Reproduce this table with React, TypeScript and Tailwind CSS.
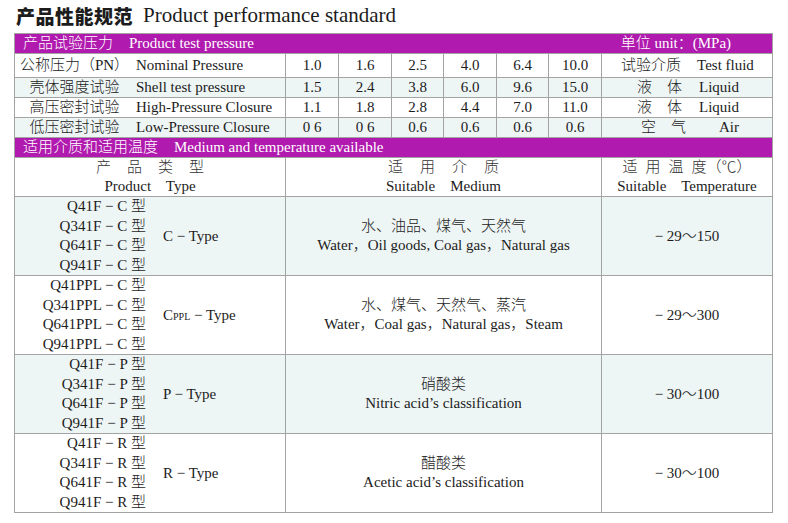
import React from 'react';

const serif = "font-['Liberation_Serif','Noto_Sans_CJK_SC',serif]";
const cell = 'border border-[#a3a3a3] p-0';

const pressureRows = [
  { cn: '公称压力（PN）', en: 'Nominal Pressure', vals: ['1.0', '1.6', '2.5', '4.0', '6.4', '10.0'], fluidCn: '试验介质', fluidEn: 'Test fluid', pl: 'pl-[19px]', gap: 'ml-[16px]', bg: 'bg-white', h: 'h-[24px]' },
  { cn: '壳体强度试验', en: 'Shell test pressure', vals: ['1.5', '2.4', '3.8', '6.0', '9.6', '15.0'], fluidCn: '液　体', fluidEn: 'Liquid', pl: 'pl-[35px]', gap: 'ml-[17px]', bg: 'bg-[#eef5f5]', h: 'h-[20px]' },
  { cn: '高压密封试验', en: 'High-Pressure Closure', vals: ['1.1', '1.8', '2.8', '4.4', '7.0', '11.0'], fluidCn: '液　体', fluidEn: 'Liquid', pl: 'pl-[35px]', gap: 'ml-[17px]', bg: 'bg-white', h: 'h-[20px]' },
  { cn: '低压密封试验', en: 'Low-Pressure Closure', vals: ['0 6', '0 6', '0.6', '0.6', '0.6', '0.6'], fluidCn: '空　气', fluidEn: 'Air', pl: 'pl-[39px]', gap: 'ml-[33px]', bg: 'bg-[#eef5f5]', h: 'h-[20px]' },
];

const groups = [
  { letter: 'C', models: ['Q41F', 'Q341F', 'Q641F', 'Q941F'], type: 'C', sub: '', cn: '水、油品、煤气、天然气', en: 'Water，Oil goods, Coal gas，Natural gas', temp: '− 29～150', bg: 'bg-[#eef5f5]' },
  { letter: 'C', models: ['Q41PPL', 'Q341PPL', 'Q641PPL', 'Q941PPL'], type: 'C', sub: 'PPL', cn: '水、煤气、天然气、蒸汽', en: 'Water，Coal gas，Natural gas，Steam', temp: '− 29～300', bg: 'bg-white' },
  { letter: 'P', models: ['Q41F', 'Q341F', 'Q641F', 'Q941F'], type: 'P', sub: '', cn: '硝酸类', en: 'Nitric acid’s classification', temp: '− 30～100', bg: 'bg-[#eef5f5]' },
  { letter: 'R', models: ['Q41F', 'Q341F', 'Q641F', 'Q941F'], type: 'R', sub: '', cn: '醋酸类', en: 'Acetic acid’s classification', temp: '− 30～100', bg: 'bg-white' },
];

export default function App() {
  return (
    <div className={`w-[788px] h-[523px] bg-white text-[#1c1c1c] ${serif}`}>
      {/* title */}
      <div className="flex h-[33px] items-center pl-[16px] pb-[2px]">
        <span className="font-['Noto_Sans_CJK_SC',sans-serif] text-[19px] font-black leading-none tracking-[0.5px]">产品性能规范</span>
        <span className="ml-[10px] text-[21px] leading-none">Product performance standard</span>
      </div>

      <table className="ml-[14px] w-[758px] table-fixed border-collapse text-[15px] font-light leading-none">
        <colgroup>
          <col className="w-[271px]" />
          <col className="w-[53px]" />
          <col className="w-[53px]" />
          <col className="w-[52px]" />
          <col className="w-[53px]" />
          <col className="w-[52px]" />
          <col className="w-[53px]" />
          <col className="w-[171px]" />
        </colgroup>
        <tbody>
          <tr className="h-[20px]">
            <td colSpan={8} className={`${cell} bg-[#b01aae] text-white`}>
              <div className="flex items-center">
                <span className="pl-[8px]">产品试验压力</span>
                <span className="ml-[16px]">Product test pressure</span>
                <span className="ml-auto pr-[41px]">单位 unit：(MPa)</span>
              </div>
            </td>
          </tr>

          {pressureRows.map((r) => (
            <tr key={r.en} className={`${r.h} ${r.bg}`}>
              <td className={cell}>
                <div className="flex items-center">
                  <span className="w-[119px] text-center">{r.cn}</span>
                  <span className="ml-[2px]">{r.en}</span>
                </div>
              </td>
              {r.vals.map((v, i) => (
                <td key={i} className={`${cell} text-center whitespace-pre`}>{v}</td>
              ))}
              <td className={cell}>
                <div className={`flex items-center ${r.pl}`}>
                  <span>{r.fluidCn}</span>
                  <span className={r.gap}>{r.fluidEn}</span>
                </div>
              </td>
            </tr>
          ))}

          <tr className="h-[20px]">
            <td colSpan={8} className={`${cell} bg-[#b01aae] text-white`}>
              <div className="flex items-center">
                <span className="pl-[8px]">适用介质和适用温度</span>
                <span className="ml-[16px]">Medium and temperature available</span>
              </div>
            </td>
          </tr>

          <tr className="h-[38px] bg-white">
            <td className={`${cell} text-center`}>
              <div className="flex justify-center gap-[16px] leading-[19px] text-[#333]">
                <span>产</span><span>品</span><span>类</span><span>型</span>
              </div>
              <div className="whitespace-pre leading-[19px]">Product    Type</div>
            </td>
            <td colSpan={6} className={`${cell} text-center`}>
              <div className="flex justify-center gap-[17px] leading-[19px] text-[#333]">
                <span>适</span><span>用</span><span>介</span><span>质</span>
              </div>
              <div className="whitespace-pre leading-[19px]">Suitable    Medium</div>
            </td>
            <td className={`${cell} text-center`}>
              <div className="flex justify-center gap-[8px] leading-[19px] text-[#333]">
                <span>适</span><span>用</span><span>温</span><span>度（℃）</span>
              </div>
              <div className="whitespace-pre leading-[19px]">Suitable    Temperature</div>
            </td>
          </tr>

          {groups.map((g, gi) => (
            <tr key={gi} className={`h-[79px] ${g.bg}`}>
              <td className={cell}>
                <div className="flex items-center">
                  <div className="w-[131px] text-right leading-[19.5px]">
                    {g.models.map((m) => (
                      <div key={m}>{m} − {g.letter} 型</div>
                    ))}
                  </div>
                  <div className="ml-[17px]">
                    {g.type}
                    {g.sub && <span className="text-[10px]">{g.sub}</span>}
                    <span> − Type</span>
                  </div>
                </div>
              </td>
              <td colSpan={6} className={`${cell} text-center leading-[19.5px]`}>
                <div>{g.cn}</div>
                <div>{g.en}</div>
              </td>
              <td className={`${cell} text-center`}>{g.temp}</td>
            </tr>
          ))}
        </tbody>
      </table>
    </div>
  );
}
